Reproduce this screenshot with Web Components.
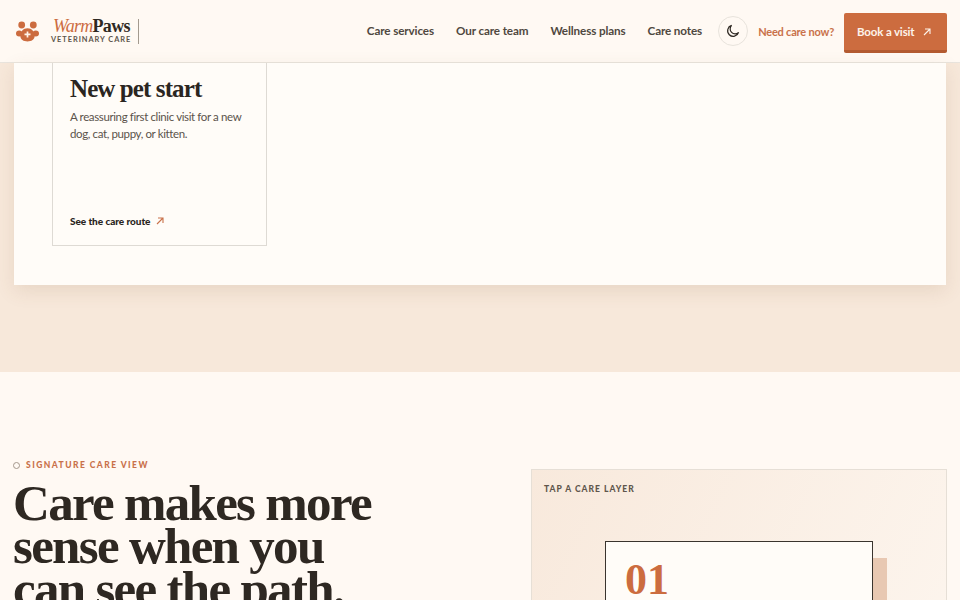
<!DOCTYPE html>
<html lang="en">
<head>
<meta charset="utf-8">
<title>WarmPaws Veterinary Care</title>
<style>
  html, body { margin: 0; height: 600px; overflow: hidden; background: #fff9f3; }
  body { font-family: "Lato", "Liberation Sans", sans-serif; color: #2e2822; }
</style>
</head>
<body>
<site-header></site-header>
<care-routes>
  <route-card heading="New pet start" link="See the care route">A reassuring first clinic visit for a new dog, cat, puppy, or kitten.</route-card>
</care-routes>
<signature-view></signature-view>

<script>
const ARROW = `<svg viewBox="0 0 10 10" width="10" height="10" fill="none" stroke="currentColor" stroke-width="1.1"><path d="M2 8 8 2M3 2h5v5"/></svg>`;

class SiteHeader extends HTMLElement {
  constructor() {
    super();
    this.attachShadow({ mode: 'open' }).innerHTML = `
      <style>
        :host { display: flex; align-items: center; height: 63px; box-sizing: border-box; padding: 0 13px 0 16px; background: #fff9f3; border-bottom: 1px solid #e9e4dd; }
        .brand { display: flex; align-items: center; }
        .paw { display: block; margin-right: 12px; }
        .words { display: flex; flex-direction: column; padding-right: 7px; border-right: 1px solid #a39a8f; height: 25px; justify-content: space-between; }
        .name { font: 700 18px/15px "Liberation Serif", serif; letter-spacing: -.7px; color: #2e2822; padding-left: 2px; }
        .name i { color: #cc6c3f; font-weight: 400; }
        .sub { font-size: 7.4px; line-height: 9px; font-weight: 700; letter-spacing: .97px; color: #5d554c; white-space: nowrap; }
        nav { display: flex; gap: 22px; margin-left: auto; padding-bottom: 2px; }
        nav a { font-size: 11.7px; font-weight: 700; color: #4f4840; letter-spacing: -.12px; white-space: nowrap; }
        .moon { width: 30px; height: 30px; box-sizing: border-box; margin: 0 10px 0 16px; border: 1px solid #e8e3dc; border-radius: 50%; display: flex; align-items: center; justify-content: center; color: #2e2822; }
        .need { font-size: 11px; font-weight: 700; color: #c9714a; margin-right: 10px; white-space: nowrap; letter-spacing: -.2px; }
        .book { display: flex; align-items: center; height: 40px; box-sizing: border-box; width: 103px; margin-top: 4px; padding: 0 15px 0 13px; background: #cc6c3f; border-bottom: 3px solid #b35a30; border-radius: 2px; color: #fdf3ea; font-size: 11.5px; font-weight: 700; white-space: nowrap; letter-spacing: -.15px; }
        .book span { display: flex; margin-left: auto; }
      </style>
      <div class="brand">
        <svg class="paw" width="23" height="23" viewBox="0 0 23 23">
          <g fill="#cc6c3f">
            <circle cx="5.7" cy="5" r="3.4"/><circle cx="17.3" cy="5" r="3.4"/>
            <ellipse cx="3.2" cy="13.4" rx="3.2" ry="3"/><ellipse cx="19.8" cy="13.4" rx="3.2" ry="3"/>
            <path d="M11.5 8.2c4.2 0 7.2 3.6 7.2 7.6 0 3.8-3.4 5.7-7.2 5.7s-7.2-1.9-7.2-5.7c0-4 3-7.6 7.2-7.6z"/>
          </g>
          <path d="M11.5 11.4v6M8.5 14.4h6" stroke="#fff4ea" stroke-width="1.7"/>
        </svg>
        <div class="words">
          <div class="name"><i>Warm</i>Paws</div>
          <div class="sub">VETERINARY CARE</div>
        </div>
      </div>
      <nav><a>Care services</a><a>Our care team</a><a>Wellness plans</a><a>Care notes</a></nav>
      <div class="moon">
        <svg width="14" height="14" viewBox="0 0 14 14" fill="none" stroke="currentColor" stroke-width="1.2"><path d="M5.6 1.4a5.6 5.6 0 1 0 7 7 4.6 4.6 0 0 1-7-7z"/></svg>
      </div>
      <span class="need">Need care now?</span>
      <a class="book">Book a visit <span>${ARROW}</span></a>`;
  }
}

class CareRoutes extends HTMLElement {
  constructor() {
    super();
    this.attachShadow({ mode: 'open' }).innerHTML = `
      <style>
        :host { display: block; height: 309px; box-sizing: border-box; padding: 0 14px; background: #f7e8da; }
        .panel { height: 222px; box-sizing: border-box; padding: 0 38px; background: #fffcf8; box-shadow: 0 6px 18px rgba(120, 80, 50, .12); }
      </style>
      <div class="panel"><slot></slot></div>`;
  }
}

class RouteCard extends HTMLElement {
  constructor() {
    super();
    this.attachShadow({ mode: 'open' }).innerHTML = `
      <style>
        :host { display: flex; flex-direction: column; width: 215px; height: 183px; box-sizing: border-box; padding: 12px 17px 17px; border: 1px solid #dedad4; border-top: 0; }
        h3 { margin: 0 0 5px; font: 700 25px/28px "Liberation Serif", serif; letter-spacing: -.9px; color: #2a2521; }
        p { margin: 0; font-size: 11.5px; line-height: 17px; letter-spacing: -.38px; color: #5b534b; }
        a { display: flex; align-items: center; gap: 5px; margin-top: auto; font-size: 10px; line-height: 14px; font-weight: 900; letter-spacing: -.05px; color: #2a2521; }
        a span { display: flex; color: #c9714a; }
      </style>
      <h3>${this.getAttribute('heading')}</h3>
      <p><slot></slot></p>
      <a>${this.getAttribute('link')} <span>${ARROW}</span></a>`;
  }
}

class SignatureView extends HTMLElement {
  constructor() {
    super();
    this.attachShadow({ mode: 'open' }).innerHTML = `
      <style>
        :host { display: grid; grid-template-columns: 1fr 416px; padding: 87px 13px 0; background: #fff9f3; }
        .eyebrow { display: flex; align-items: center; gap: 6px; font-size: 8.5px; line-height: 12px; font-weight: 900; letter-spacing: 1.45px; color: #c9714a; }
        .eyebrow i { width: 5px; height: 5px; border: 1px solid #a3978b; border-radius: 50%; }
        h2 { margin: 11px 0 0; font: 700 51px/43px "Liberation Serif", serif; letter-spacing: -1.7px; color: #2e2822; }
        .stage { margin-top: 10px; height: 300px; box-sizing: border-box; padding: 13px 12px 0; border: 1px solid #e6dfd6; background: linear-gradient(115deg, #f8e9dc, #fdf6ef); }
        .tap { font-size: 8.5px; line-height: 12px; font-weight: 900; letter-spacing: 1px; color: #5f564c; }
        .layers { display: flex; align-items: flex-start; margin: 46px 0 0 61px; }
        .layer { width: 268px; height: 200px; box-sizing: border-box; padding: 14px 19px; border: 1px solid #3a342e; background: #fffcf8; }
        .num { font: 700 44px/48px "Liberation Serif", serif; color: #cc6c3f; }
        .back { width: 14px; height: 200px; margin-top: 17px; background: #e8c8b2; }
      </style>
      <div>
        <div class="eyebrow"><i></i>SIGNATURE CARE VIEW</div>
        <h2>Care makes more<br>sense when you<br>can see the path.</h2>
      </div>
      <div class="stage">
        <div class="tap">TAP A CARE LAYER</div>
        <div class="layers">
          <div class="layer"><div class="num">01</div></div>
          <div class="back"></div>
        </div>
      </div>`;
  }
}

customElements.define('site-header', SiteHeader);
customElements.define('care-routes', CareRoutes);
customElements.define('route-card', RouteCard);
customElements.define('signature-view', SignatureView);
</script>
</body>
</html>
